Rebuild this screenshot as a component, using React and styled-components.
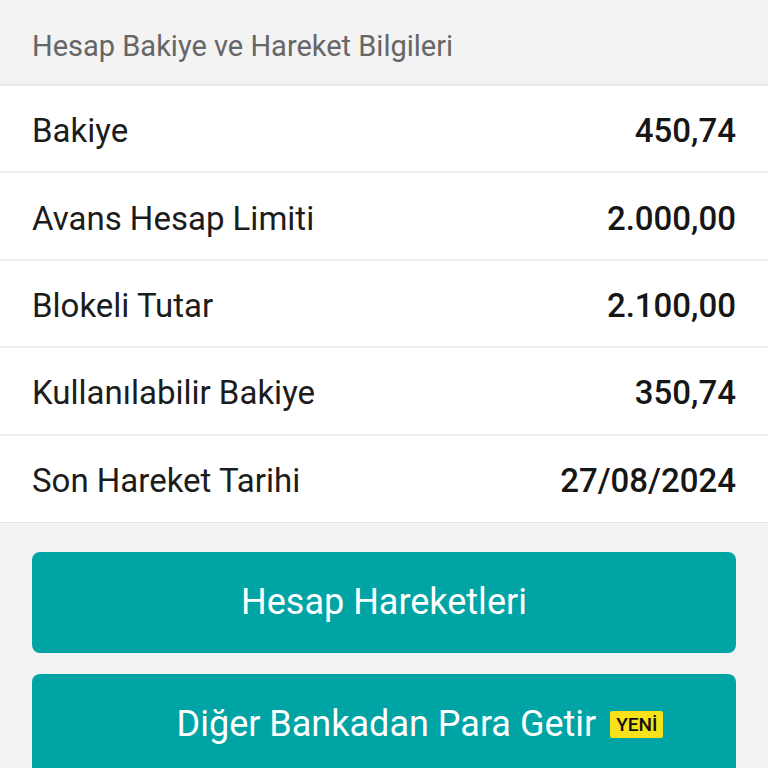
import React from 'react'
import styled, { createGlobalStyle } from 'styled-components'

const GlobalStyle = createGlobalStyle`
  html, body {
    margin: 0;
    padding: 0;
    background: #f3f3f3;
    font-family: Roboto, "Noto Sans", sans-serif;
  }
`

const Page = styled.div`
  width: 768px;
  height: 768px;
  overflow: hidden;
  background: #f3f3f3;
`

const Header = styled.div`
  height: 86px;
  display: flex;
  align-items: center;
  padding: 8px 32px 0;
  box-sizing: border-box;
  font-size: 29px;
  color: #666666;
  border-bottom: 2px solid #e9e9e9;
`

const List = styled.div`
  background: #ffffff;
`

const Row = styled.div`
  height: 87.4px;
  box-sizing: border-box;
  display: flex;
  align-items: center;
  justify-content: space-between;
  padding: 4px 32px 0;
  border-bottom: 2px solid #ededed;
  &:last-child {
    border-bottom: 1px solid #e6e6e6;
  }
`

const Label = styled.span`
  font-size: 33px;
  color: #1c1c1c;
`

const Value = styled.span`
  font-size: 33px;
  font-weight: 500;
  color: #161616;
`

const Actions = styled.div`
  display: flex;
  flex-direction: column;
  gap: 21px;
  padding: 29px 32px 0;
`

const ActionButton = styled.button`
  height: 101px;
  width: 100%;
  border: none;
  border-radius: 8px;
  background: #00a4a4;
  color: #ffffff;
  font-family: Roboto, "Noto Sans", sans-serif;
  font-size: 36px;
  display: flex;
  align-items: center;
  justify-content: center;
  gap: 14px;
  padding: 0;
  padding-left: ${({ $shift }) => $shift || 0}px;
`

const Badge = styled.span`
  background: #f7e11b;
  color: #111111;
  font-size: 19px;
  font-weight: 500;
  padding: 3px 6px 2px;
  border-radius: 2px;
  line-height: 1.2;
`

const rows = [
  ['Bakiye', '450,74'],
  ['Avans Hesap Limiti', '2.000,00'],
  ['Blokeli Tutar', '2.100,00'],
  ['Kullanılabilir Bakiye', '350,74'],
  ['Son Hareket Tarihi', '27/08/2024'],
]

export default function App() {
  return (
    <>
      <GlobalStyle />
      <Page>
        <Header>Hesap Bakiye ve Hareket Bilgileri</Header>
        <List>
          {rows.map(([label, value]) => (
            <Row key={label}>
              <Label>{label}</Label>
              <Value>{value}</Value>
            </Row>
          ))}
        </List>
        <Actions>
          <ActionButton>Hesap Hareketleri</ActionButton>
          <ActionButton $shift={72}>
            Diğer Bankadan Para Getir
            <Badge>YENİ</Badge>
          </ActionButton>
        </Actions>
      </Page>
    </>
  )
}
